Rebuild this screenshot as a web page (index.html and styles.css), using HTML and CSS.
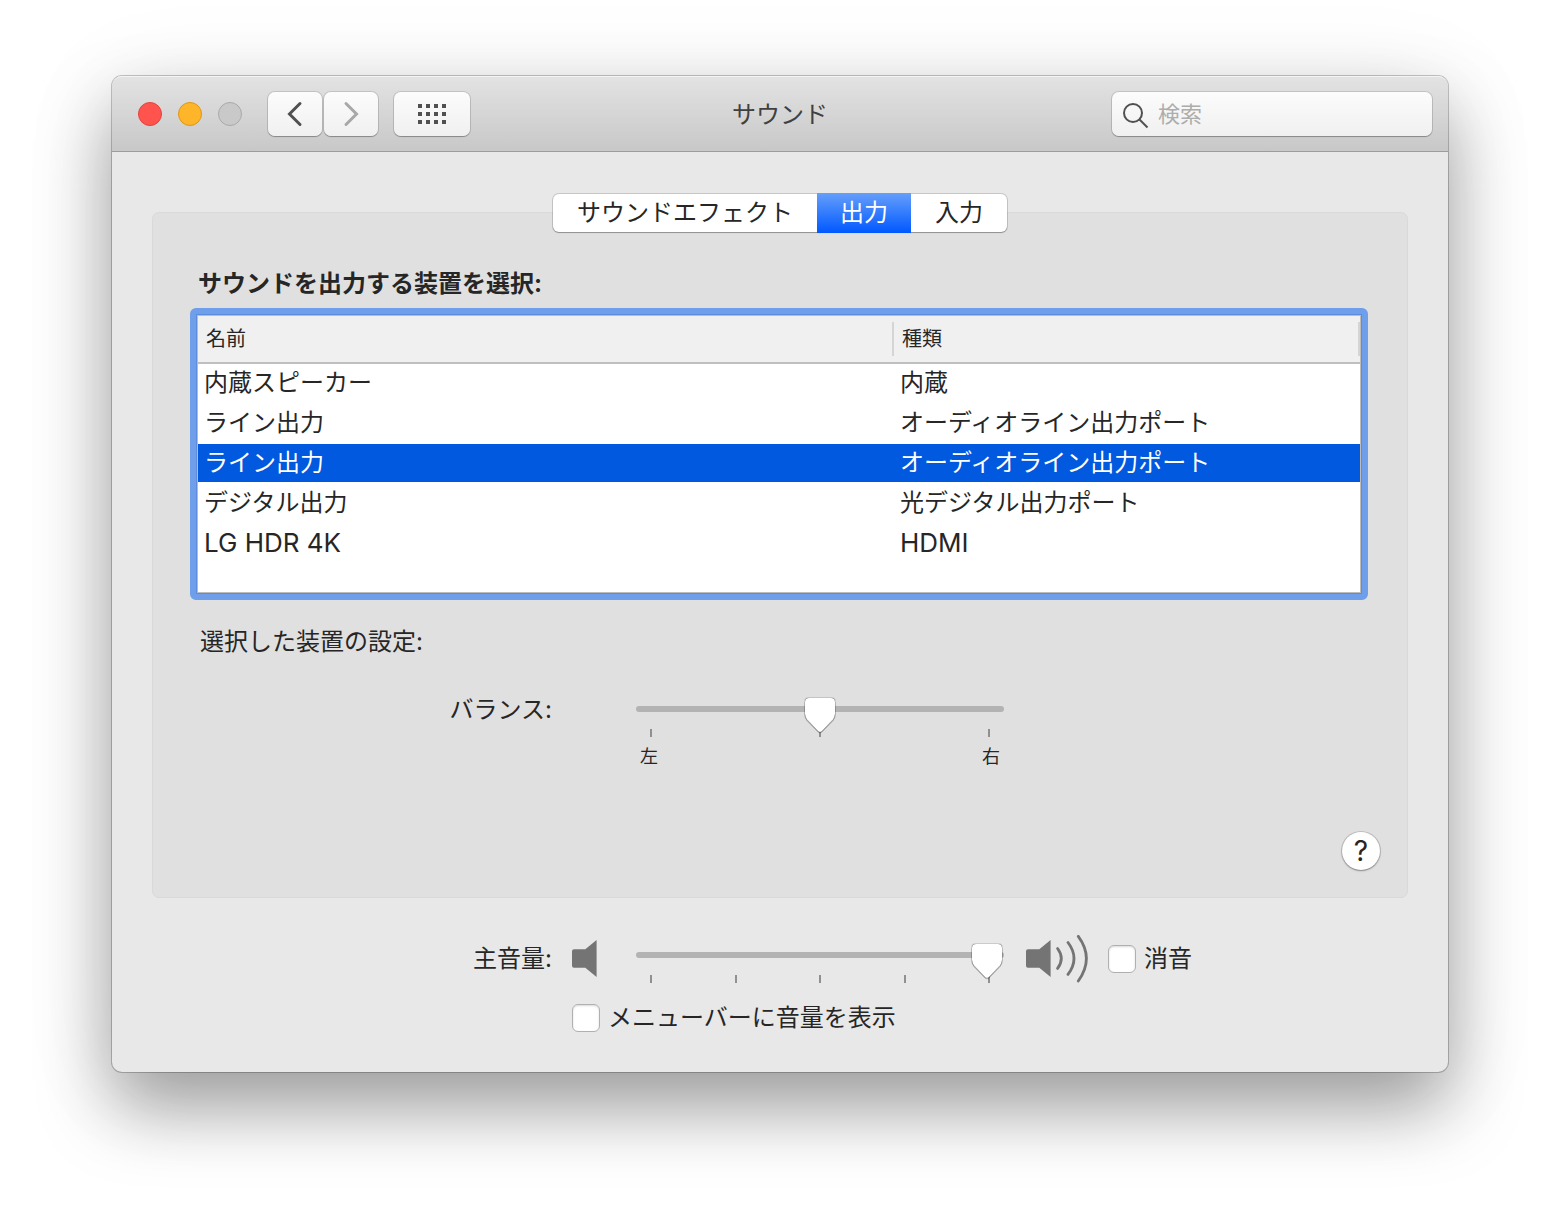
FILE: index.html
```html
<!DOCTYPE html>
<html lang="ja">
<head>
  <meta charset="UTF-8">
  <meta name="viewport" content="width=device-width, initial-scale=1.0">
  <title>サウンド</title>
  <link rel="stylesheet" href="styles.css">
</head>
<body>
  <main class="window">
    <header class="titlebar">
      <div class="titlebar-left">
        <div class="lights">
          <button class="light light-close" aria-label="閉じる"></button>
          <button class="light light-min" aria-label="しまう"></button>
          <button class="light light-zoom" aria-label="拡大" disabled></button>
        </div>
        <div class="nav">
          <button class="tool-btn" aria-label="戻る">
            <svg width="16" height="26" viewBox="0 0 16 26"><path d="M13 2.5L2.5 13L13 23.5" fill="none" stroke="#505050" stroke-width="3" stroke-linecap="round"/></svg>
          </button>
          <button class="tool-btn" aria-label="進む" disabled>
            <svg width="16" height="26" viewBox="0 0 16 26"><path d="M3 2.5L13.5 13L3 23.5" fill="none" stroke="#a8a8a8" stroke-width="3" stroke-linecap="round"/></svg>
          </button>
        </div>
        <button class="tool-btn tool-btn-wide" aria-label="すべてを表示">
          <svg width="28" height="20" viewBox="0 0 28 20" fill="#505050">
            <path d="M0 0h4v4H0zM8 0h4v4H8zM16 0h4v4h-4zM24 0h4v4h-4zM0 8h4v4H0zM8 8h4v4H8zM16 8h4v4h-4zM24 8h4v4h-4zM0 16h4v4H0zM8 16h4v4H8zM16 16h4v4h-4zM24 16h4v4h-4z"/>
          </svg>
        </button>
      </div>
      <h1 class="title">サウンド</h1>
      <label class="search">
        <svg width="28" height="28" viewBox="0 0 28 28" fill="none" stroke="#505050" stroke-width="2">
          <circle cx="12" cy="12" r="9"/>
          <path d="M18.5 18.5L26.5 26.5"/>
        </svg>
        <input type="search" placeholder="検索" aria-label="検索">
      </label>
    </header>

    <div class="content">
      <div class="tabs" role="tablist">
        <button class="tab" role="tab" aria-selected="false">サウンドエフェクト</button>
        <button class="tab active" role="tab" aria-selected="true">出力</button>
        <button class="tab" role="tab" aria-selected="false">入力</button>
      </div>

      <section class="panel">
        <h2 class="panel-title" id="devicesTitle">サウンドを出力する装置を選択:</h2>
        <div class="device-list">
          <div class="device-scroll">
            <table class="devices" aria-labelledby="devicesTitle">
              <thead>
                <tr>
                  <th class="col-name"><span>名前</span></th>
                  <th><span>種類</span></th>
                </tr>
              </thead>
              <tbody>
                <tr><td>内蔵スピーカー</td><td>内蔵</td></tr>
                <tr><td>ライン出力</td><td>オーディオライン出力ポート</td></tr>
                <tr class="selected"><td>ライン出力</td><td>オーディオライン出力ポート</td></tr>
                <tr><td>デジタル出力</td><td>光デジタル出力ポート</td></tr>
                <tr class="latin"><td>LG HDR 4K</td><td>HDMI</td></tr>
              </tbody>
            </table>
          </div>
        </div>

        <p class="settings-title">選択した装置の設定:</p>
        <div class="form balance">
          <label class="form-label" for="balance">バランス:</label>
          <div class="slider">
            <input type="range" id="balance" min="0" max="100" value="50">
            <div class="ticks"><i></i><i></i><i></i></div>
            <div class="tick-labels"><span>左</span><span>右</span></div>
          </div>
        </div>
        <button class="help" aria-label="ヘルプ">?</button>
      </section>

      <div class="form volume">
        <label class="form-label" for="volume">主音量:</label>
        <svg class="speaker" width="44" height="48" viewBox="2 0 44 48" fill="#747474">
          <path d="M4 14.3H15.3L26.6 5V42L15.3 32.8H4a2 2 0 0 1-2-2V16.3a2 2 0 0 1 2-2z"/>
        </svg>
        <div class="slider">
          <input type="range" id="volume" min="0" max="100" step="0.1" value="99.7">
          <div class="ticks"><i></i><i></i><i></i><i></i><i></i></div>
        </div>
        <div class="mute">
          <svg width="64" height="48" viewBox="0 0 64 48" fill="#747474">
            <path d="M4 14.3H15.3L26.6 5V42L15.3 32.8H4a2 2 0 0 1-2-2V16.3a2 2 0 0 1 2-2z"/>
            <path d="M33.6 13.5Q41 23.4 33.6 33.4M44 7.5Q56 23.4 44 39.4M54.3 1.3Q70.5 23.4 54.3 46" fill="none" stroke="#747474" stroke-width="2.8" stroke-linecap="round"/>
          </svg>
          <label class="check"><input type="checkbox">消音</label>
        </div>
        <label class="check menubar"><input type="checkbox">メニューバーに音量を表示</label>
      </div>
    </div>
  </main>
</body>
</html>
```

FILE: styles.css
```css
* {
  box-sizing: border-box;
}
body {
  margin: 0;
  padding: 76px 112px 148px;
  background-color: #ffffff;
  color: #262626;
  font-family: Inter, "Noto Sans CJK JP", sans-serif;
  font-size: 24px;
  line-height: 32px;
}
h1, h2, p {
  margin: 0;
}
button, input {
  font: inherit;
  color: inherit;
  margin: 0;
}
button {
  border: none;
  padding: 0;
}
svg {
  display: block;
  flex: none;
}
.window {
  border-radius: 10px;
  background-color: #e8e8e8;
  box-shadow: 0 0 0 1px rgba(0, 0, 0, 0.22), 0 36px 72px rgba(0, 0, 0, 0.36), 0 10px 100px rgba(0, 0, 0, 0.08);
}

/* title bar */
.titlebar {
  display: grid;
  grid-template-columns: 1fr auto 1fr;
  align-items: center;
  height: 76px;
  padding: 0 16px;
  border-bottom: 1px solid #9c9c9c;
  border-radius: 10px 10px 0 0;
  background: linear-gradient(#e3e3e3, #c8c8c8);
  box-shadow: inset 0 2px 0 -1px #f4f4f4;
}
.titlebar-left {
  display: flex;
  align-items: center;
  margin-left: 10px;
}
.lights {
  display: flex;
  gap: 16px;
  margin-right: 26px;
}
.light {
  width: 24px;
  height: 24px;
  border: 1px solid #a9a9a9;
  border-radius: 50%;
  background-color: #c9c9c9;
}
.light-close {
  border-color: #e2413d;
  background-color: #ff544d;
}
.light-min {
  border-color: #dc9717;
  background-color: #ffb52a;
}
.nav {
  display: flex;
  gap: 2px;
  margin-right: 16px;
}
.tool-btn {
  display: flex;
  align-items: center;
  justify-content: center;
  width: 54px;
  height: 44px;
  border-radius: 7px;
  background: linear-gradient(#fcfcfc, #f0f0f0);
  box-shadow: 0 0 0 1px rgba(0, 0, 0, 0.12), 0 1px 1px rgba(0, 0, 0, 0.25);
}
.tool-btn-wide {
  width: 76px;
}
.title {
  padding-top: 2px;
  font-size: 24px;
  font-weight: 400;
  color: #404040;
}
.search {
  display: flex;
  align-items: center;
  justify-self: end;
  gap: 9px;
  width: 320px;
  height: 44px;
  padding: 2px 9px 0;
  border-radius: 7px;
  background: linear-gradient(#fcfcfc, #f0f0f0);
  box-shadow: 0 0 0 1px rgba(0, 0, 0, 0.12), 0 1px 1px rgba(0, 0, 0, 0.25);
}
.search input {
  flex: 1;
  min-width: 0;
  padding: 0 0 2px;
  border: none;
  outline: none;
  background: none;
  font-size: 22px;
  appearance: none;
}
.search input::placeholder {
  color: #adadad;
}

/* tabs and panel */
.content {
  padding: 42px 40px 38px;
}
.tabs {
  position: relative;
  display: flex;
  width: fit-content;
  margin: 0 auto -20px;
  border-radius: 6px;
  background-color: #ffffff;
  box-shadow: 0 0 0 1px rgba(0, 0, 0, 0.14), 0 1px 1px rgba(0, 0, 0, 0.25);
}
.tab {
  height: 38px;
  padding: 0 24px;
  background: none;
}
.tab.active {
  height: 40px;
  margin: -1px 0;
  padding: 0 23px;
  background: linear-gradient(#659ffb, #0058ff);
  color: #ffffff;
}
.panel {
  padding: 55px 0 27px;
  border: 1px solid #d9d9d9;
  border-radius: 7px;
  background-color: #e0e0e0;
}
.panel-title {
  margin: 0 45px 8px;
  font-size: 24px;
  font-weight: 700;
}
.device-list {
  margin: 0 39px 0 37px;
  padding: 2px;
  border: 6px solid #6f9eea;
  border-radius: 6px;
  background-color: #bcbcbc;
  box-shadow: inset 0 0 0 1px #5c8cdb;
}
.device-scroll {
  padding-bottom: 28px;
  background-color: #ffffff;
}
.devices {
  width: 100%;
  border-spacing: 0;
  table-layout: fixed;
}
.devices th {
  padding: 6px 0;
  border-bottom: 2px solid #bfbfbf;
  background-color: #f0f0f0;
  font-size: 20px;
  font-weight: 400;
  text-align: left;
}
.devices th span {
  display: block;
  padding-left: 8px;
  border-right: 2px solid #d5d5d5;
  line-height: 34px;
}
.devices .col-name {
  width: 59.9%;
}
.devices td {
  height: 40px;
  padding: 0 6px;
  border-bottom: 2px solid #ffffff;
}
.devices .selected td {
  background-color: #0059de;
  color: #ffffff;
}
.devices .latin td {
  font-size: 26px;
}
.settings-title {
  margin: 26px 47px 36px;
}
.help {
  display: block;
  width: 38px;
  height: 38px;
  margin: 63px 27px 0 auto;
  border-radius: 50%;
  background-color: #ffffff;
  box-shadow: 0 0 0 1px rgba(0, 0, 0, 0.14), 0 1px 2px rgba(0, 0, 0, 0.3);
  font-size: 28px;
}

/* label / icon / slider / extras */
.form {
  display: grid;
  grid-template-columns: 1fr 44px 368px 1fr;
  column-gap: 20px;
  padding-left: 16px;
}
.form-label {
  text-align: right;
}
.slider {
  grid-column: 3;
}
.slider input {
  position: relative;
  z-index: 1;
  display: block;
  width: 100%;
  height: 22px;
  background: none;
  appearance: none;
}
.slider input::-webkit-slider-runnable-track {
  height: 6px;
  border-radius: 3px;
  background-color: #b3b3b3;
}
.slider input::-webkit-slider-thumb {
  width: 32px;
  height: 38px;
  margin-top: -9px;
  background: url("data:image/svg+xml,%3Csvg xmlns='http://www.w3.org/2000/svg' width='32' height='38'%3E%3Cg stroke='%23000'%3E%3Cpath d='M5 1H27Q31 1 31 5V17Q31 20 29 22.500L18 34Q16 36 14 34L3 22.500Q1 20 1 17V5Q1 1 5 1Z' stroke-width='2' stroke-opacity='.12'/%3E%3Cpath d='M5 2H27Q31 2 31 6V18Q31 21 29 23.500L18 35Q16 37 14 35L3 23.500Q1 21 1 18V6Q1 2 5 2Z' fill='none' stroke-opacity='.2'/%3E%3C/g%3E%3Cpath d='M5 1H27Q31 1 31 5V17Q31 20 29 22.500L18 34Q16 36 14 34L3 22.500Q1 20 1 17V5Q1 1 5 1Z' fill='%23fff'/%3E%3C/svg%3E") no-repeat;
  appearance: none;
}
.ticks {
  display: flex;
  justify-content: space-between;
  margin-top: 9px;
  padding: 0 14px;
}
.ticks i {
  width: 2px;
  height: 8px;
  background-color: #909090;
}
.tick-labels {
  display: flex;
  justify-content: space-between;
  margin-top: 8px;
  padding: 0 4px;
  font-size: 18px;
  line-height: 24px;
}
.balance .slider {
  margin-top: 4px;
}
.volume {
  row-gap: 19px;
  align-items: center;
  margin-top: 36px;
}
.volume .slider {
  padding-top: 10px;
}
.mute {
  display: flex;
  align-items: center;
  gap: 20px;
}
.check {
  display: flex;
  align-items: center;
  gap: 8px;
  white-space: nowrap;
}
.check input {
  flex: none;
  width: 28px;
  height: 28px;
  border: 1px solid #b0b0b0;
  border-radius: 6px;
  background-color: #ffffff;
  box-shadow: inset 0 1px 2px rgba(0, 0, 0, 0.15);
  appearance: none;
}
.check input:checked {
  border-color: #0059de;
  background-color: #0059de;
}
.menubar {
  grid-column: 2 / -1;
}
```
